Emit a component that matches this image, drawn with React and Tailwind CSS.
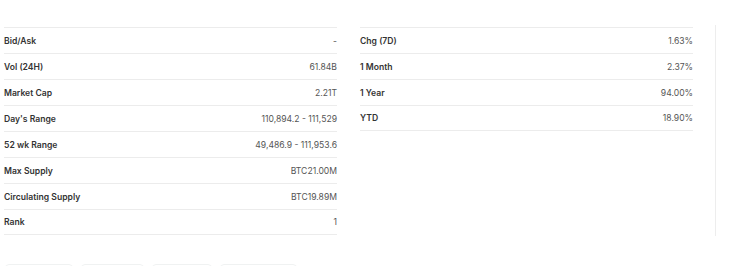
const leftRows = [
  ['Bid/Ask', '-'],
  ['Vol (24H)', '61.84B'],
  ['Market Cap', '2.21T'],
  ["Day's Range", '110,894.2 - 111,529'],
  ['52 wk Range', '49,486.9 - 111,953.6'],
  ['Max Supply', 'BTC21.00M'],
  ['Circulating Supply', 'BTC19.89M'],
  ['Rank', '1'],
];

const rightRows = [
  ['Chg (7D)', '1.63%'],
  ['1 Month', '2.37%'],
  ['1 Year', '94.00%'],
  ['YTD', '18.90%'],
];

const StatTable = ({ rows, className }) => (
  <div className={className}>
    {rows.map(([label, value], i) => (
      <div
        key={label}
        className={`flex h-[26px] items-center justify-between border-t border-[#ececec] pt-px ${i === rows.length - 1 ? 'border-b' : ''}`}
      >
        <span className="font-semibold text-[#333333]">{label}</span>
        <span className="text-[#555555]">{value}</span>
      </div>
    ))}
  </div>
);

const App = () => {
  return (
    <div
      className="h-[266px] w-[735px] overflow-hidden bg-white text-[8.6px] leading-none"
      style={{ fontFamily: 'Inter, "Liberation Sans", sans-serif' }}
    >
      <div className="flex pt-[27px]">
        <StatTable rows={leftRows} className="w-[337px] pl-[4px]" />
        <StatTable rows={rightRows} className="ml-[23px] w-[333px] self-start" />
        <div className="ml-[22px] h-[211px] w-px -mt-[2px] bg-[#ededed]" />
      </div>
      <div className="mt-[28px] flex gap-[8px] pl-[5px]">
        <div className="h-[6px] w-[68px] rounded-t border border-[#f0f2f2]" />
        <div className="h-[6px] w-[63px] rounded-t border border-[#f0f2f2]" />
        <div className="h-[6px] w-[60px] rounded-t border border-[#f0f2f2]" />
        <div className="h-[6px] w-[77px] rounded-t border border-[#f0f2f2]" />
      </div>
    </div>
  );
};

export default App;
